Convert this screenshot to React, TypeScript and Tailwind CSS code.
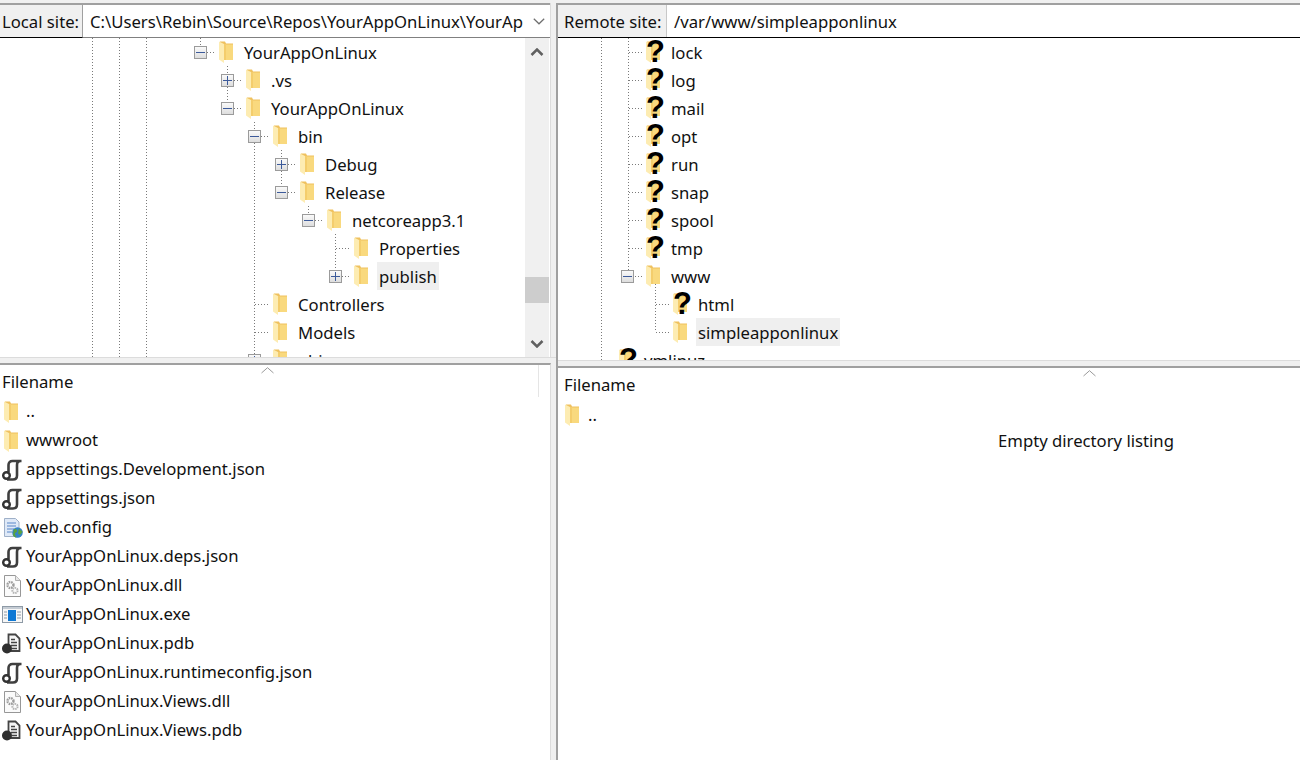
type TreeRow = {
	label: string
	indent: string
	expander?: "open" | "closed"
	unknown?: boolean
	selected?: boolean
}

const leftTree: TreeRow[] = [
	{ label: "YourAppOnLinux", indent: "pl-[194px]", expander: "open" },
	{ label: ".vs", indent: "pl-[221px]", expander: "closed" },
	{ label: "YourAppOnLinux", indent: "pl-[221px]", expander: "open" },
	{ label: "bin", indent: "pl-[248px]", expander: "open" },
	{ label: "Debug", indent: "pl-[275px]", expander: "closed" },
	{ label: "Release", indent: "pl-[275px]", expander: "open" },
	{ label: "netcoreapp3.1", indent: "pl-[302px]", expander: "open" },
	{ label: "Properties", indent: "pl-[329px]" },
	{ label: "publish", indent: "pl-[329px]", expander: "closed", selected: true },
	{ label: "Controllers", indent: "pl-[248px]" },
	{ label: "Models", indent: "pl-[248px]" },
	{ label: "obj", indent: "pl-[248px]", expander: "closed" },
]

const rightTree: TreeRow[] = [
	{ label: "lock", indent: "pl-[63px]", unknown: true },
	{ label: "log", indent: "pl-[63px]", unknown: true },
	{ label: "mail", indent: "pl-[63px]", unknown: true },
	{ label: "opt", indent: "pl-[63px]", unknown: true },
	{ label: "run", indent: "pl-[63px]", unknown: true },
	{ label: "snap", indent: "pl-[63px]", unknown: true },
	{ label: "spool", indent: "pl-[63px]", unknown: true },
	{ label: "tmp", indent: "pl-[63px]", unknown: true },
	{ label: "www", indent: "pl-[63px]", expander: "open" },
	{ label: "html", indent: "pl-[90px]", unknown: true },
	{ label: "simpleapponlinux", indent: "pl-[90px]", selected: true },
	{ label: "vmlinuz", indent: "pl-[36px]", unknown: true },
]

const leftFiles: { name: string; icon: string }[] = [
	{ name: "..", icon: "folder" },
	{ name: "wwwroot", icon: "folder" },
	{ name: "appsettings.Development.json", icon: "script" },
	{ name: "appsettings.json", icon: "script" },
	{ name: "web.config", icon: "config" },
	{ name: "YourAppOnLinux.deps.json", icon: "script" },
	{ name: "YourAppOnLinux.dll", icon: "dll" },
	{ name: "YourAppOnLinux.exe", icon: "exe" },
	{ name: "YourAppOnLinux.pdb", icon: "pdb" },
	{ name: "YourAppOnLinux.runtimeconfig.json", icon: "script" },
	{ name: "YourAppOnLinux.Views.dll", icon: "dll" },
	{ name: "YourAppOnLinux.Views.pdb", icon: "pdb" },
]

const Folder = () => (
	<svg width="14" height="22" viewBox="0 0 14 22" className="shrink-0">
		<path d="M1 0.500h5l1 2h7V19H1z" fill="#efc15f" />
		<path d="M5 3.500h9V19H5z" fill="#f9d97e" />
		<path d="M5 3.500h2V19H5z" fill="#f4cd6c" />
		<path d="M0 0.500l5 2.500V22l-5-3.500z" fill="#fdecb2" />
	</svg>
)

const UnknownFolder = () => (
	<div className="relative w-[14px] h-[22px] shrink-0">
		<Folder />
		<span className="absolute left-0 top-[-6px] font-['Liberation_Sans'] font-bold text-[31px] leading-[34px] text-black">
			?
		</span>
	</div>
)

const Expander = ({ open }: { open: boolean }) => (
	<svg width="13" height="13" viewBox="0 0 13 13" className="shrink-0">
		<defs>
			<linearGradient id="expanderFill" x1="0" x2="0" y1="0" y2="1">
				<stop offset="0" stopColor="#fbfbfb" />
				<stop offset="1" stopColor="#dcdcdc" />
			</linearGradient>
		</defs>
		<rect x="0.5" y="0.5" width="12" height="12" fill="url(#expanderFill)" stroke="#9b9b9b" />
		<path d={open ? "M2 6.5h9" : "M2 6.5h9M6.5 2v9"} stroke="#3c5a9a" shapeRendering="crispEdges" />
	</svg>
)

const FileIcon = ({ type }: { type: string }) => {
	if (type === "folder")
		return (
			<div className="w-5 pl-[3px] flex">
				<Folder />
			</div>
		)
	if (type === "script")
		return (
			<svg width="22" height="22" viewBox="0 0 22 22" className="shrink-0">
				<path
					d="M7.500 13V6c0-2.500 1.500-4 4-4H20.500M19.500 2c-2.500 0-3.500 1.500-3.500 4v10.500c0 2.500-1.500 4-4 4H6"
					fill="none"
					stroke="#3f3f3f"
					strokeWidth="2.600"
				/>
				<circle cx="5.500" cy="16.500" r="3.300" fill="#fff" stroke="#333" strokeWidth="2.400" />
			</svg>
		)
	if (type === "config")
		return (
			<svg width="22" height="22" viewBox="0 0 22 22" className="shrink-0">
				<path d="M3.500 1.500h11l3.500 3.500v14.500h-14.500z" fill="#dfe9f7" stroke="#9fb0c8" />
				<path d="M6 6h9M6 9h9M6 12h7M6 15h5" stroke="#5b88c9" strokeWidth="1.200" />
				<circle cx="16.500" cy="15.500" r="5.300" fill="#3683c6" />
				<path d="M13 12c2.500-.5 3.500 1 3 2.500s-2.500 1-2 3l1.500 3c-1.500 0-3-1-3.500-2.500zM18 11c0 2 1.500 1.500 3.500 3.500-.5 2-1.500 1.500-2.500 3.500l-2-1.500z" fill="#5aa33f" />
			</svg>
		)
	if (type === "dll")
		return (
			<svg width="22" height="22" viewBox="0 0 22 22" className="shrink-0">
				<path d="M3.500 0.500h11l5 5v16h-16z" fill="#fbfbfb" stroke="#979797" />
				<path d="M14.500 0.500v5h5" fill="#e8e8e8" stroke="#b0b0b0" />
				<circle cx="9.500" cy="10" r="3" fill="none" stroke="#9c9c9c" strokeWidth="2.400" strokeDasharray="1.600 0.800" />
				<circle cx="14" cy="15.500" r="2.600" fill="none" stroke="#b4b4b4" strokeWidth="2" strokeDasharray="1.500 0.800" />
			</svg>
		)
	if (type === "exe")
		return (
			<svg width="22" height="20" viewBox="0 0 22 20" className="shrink-0 mt-px">
				<rect x="1.500" y="1.500" width="20" height="16" fill="#f7f7f7" stroke="#8e9aa6" />
				<rect x="2" y="2" width="19" height="2" fill="#c5ccd4" />
				<rect x="7" y="5" width="8" height="11" fill="#0f78d4" />
				<path d="M3 7h3M3 10h3M3 13h3M16 7h4M16 10h4M16 13h4" stroke="#8f9aa5" />
			</svg>
		)
	return (
		<svg width="22" height="22" viewBox="0 0 22 22" className="shrink-0">
			<path d="M7.500 1.500h7l4 4v12.500h-11z" fill="#f6f6f6" stroke="#444" strokeWidth="1.800" />
			<path d="M10 6.500h4M10 9.500h6M10 12.500h6M11 15.500h5" stroke="#444" strokeWidth="1.400" />
			<circle cx="6" cy="15.500" r="5" fill="#2f2f2f" />
		</svg>
	)
}

const ScrollBar = () => (
	<div className="w-[24px] h-full bg-[#f0f0f0] flex flex-col items-center shrink-0">
		<svg width="14" height="8" viewBox="0 0 14 8" className="mt-[10px]">
			<path d="M1.500 7L7 1.500 12.500 7" fill="none" stroke="#606060" strokeWidth="2.500" />
		</svg>
		<div className="w-full h-[26px] bg-[#cdcdcd] mt-[221px]" />
		<svg width="14" height="8" viewBox="0 0 14 8" className="mt-[37px]">
			<path d="M1.500 1L7 6.500 12.500 1" fill="none" stroke="#606060" strokeWidth="2.500" />
		</svg>
	</div>
)

const Tree = ({ rows }: { rows: TreeRow[] }) => (
	<div className="relative">
		{rows.map((row, i) => (
			<div key={i} className={`flex items-center h-[28px] ${row.indent}`}>
				<div className="w-[13px] shrink-0 flex">
					{row.expander && <Expander open={row.expander === "open"} />}
				</div>
				<div className="ml-[12px] mr-[9px]">{row.unknown ? <UnknownFolder /> : <Folder />}</div>
				<span className={`block h-[28px] px-[2px] leading-[30px] whitespace-nowrap ${row.selected ? "bg-[#efefef]" : ""}`}>
					{row.label}
				</span>
			</div>
		))}
	</div>
)

// tree connector dots, coordinates are relative to the pane
const Guides = ({ v, h }: { v: number[][]; h: number[][] }) => (
	<svg width="525" height="340" className="absolute left-0 top-0" shapeRendering="crispEdges">
		{v.map(([x, y1, y2], i) => (
			<line key={i} x1={x + 0.5} x2={x + 0.5} y1={y1} y2={y2} stroke="#7a7a7a" strokeDasharray="1 2" />
		))}
		{h.map(([x1, x2, y], i) => (
			<line key={i} x1={x1} x2={x2} y1={y + 0.5} y2={y + 0.5} stroke="#7a7a7a" strokeDasharray="1 2" />
		))}
	</svg>
)

const leftV = [
	[92, 0, 320],
	[119, 0, 320],
	[146, 0, 320],
	[200, 0, 8],
	[227, 28, 36],
	[227, 49, 64],
	[254, 84, 92],
	[254, 105, 320],
	[281, 112, 120],
	[281, 133, 148],
	[308, 168, 176],
	[335, 196, 232],
]
const leftH = [
	[207, 216, 14],
	[234, 243, 42],
	[234, 243, 70],
	[261, 270, 98],
	[288, 297, 126],
	[288, 297, 154],
	[315, 324, 182],
	[336, 351, 210],
	[342, 351, 238],
	[255, 270, 266],
	[255, 270, 294],
]

const rightV = [
	[43, 0, 322],
	[70, 0, 232],
	[97, 246, 294],
]
const rightH = [
	[71, 86, 14],
	[71, 86, 42],
	[71, 86, 70],
	[71, 86, 98],
	[71, 86, 126],
	[71, 86, 154],
	[71, 86, 182],
	[71, 86, 210],
	[77, 86, 238],
	[98, 113, 266],
	[98, 113, 294],
]

const SortCaret = ({ className }: { className: string }) => (
	<svg width="13" height="7" viewBox="0 0 13 7" className={`absolute ${className}`}>
		<path d="M0.500 6L6.500 0.700 12.500 6" fill="none" stroke="#9a9a9a" />
	</svg>
)

export default function App() {
	return (
		<div className="w-[1300px] h-[760px] bg-[#f0f0f0] pt-[3px] flex overflow-hidden text-[16.7px] text-[#111] font-['Noto_Sans',sans-serif]">
			{/* local site */}
			<div className="w-[556px] flex flex-col shrink-0">
				<div className="w-[551px] h-[354px] bg-white border-r border-[#dcdcdc] flex flex-col shrink-0">
					<div className="h-[35px] shrink-0 flex border-t-2 border-[#a0a0a0]">
						<div className="w-[83px] shrink-0 bg-[#f0f0f0] border-r border-[#a0a0a0] border-b border-b-black pl-[2px] leading-[34px] whitespace-nowrap">
							Local site:
						</div>
						<div className="flex-1 flex items-center min-w-0 border-b border-[#808080]">
							<div className="w-[440px] h-[32px] pl-[7px] overflow-hidden whitespace-nowrap leading-[34px]">
								C:\Users\Rebin\Source\Repos\YourAppOnLinux\YourAppOnLinux\bin\Release
							</div>
							<svg width="12" height="7" viewBox="0 0 12 7" className="ml-[10px] shrink-0">
								<path d="M0.800 0.800L6 5.800 11.200 0.800" fill="none" stroke="#6e6e6e" strokeWidth="1.200" />
							</svg>
						</div>
					</div>
					<div className="flex-1 flex min-h-0 pr-px">
						<div className="relative flex-1 overflow-hidden">
							<Guides v={leftV} h={leftH} />
							<Tree rows={leftTree} />
						</div>
						<ScrollBar />
					</div>
				</div>
				<div className="h-[6px] shrink-0 border-t border-[#dcdcdc]" />
				<div className="relative w-[551px] flex-1 bg-white border-t-2 border-[#a0a0a0] border-r border-r-[#dcdcdc]">
					<SortCaret className="left-[261px] top-[2px]" />
					<div className="absolute left-[538px] top-0 h-[32px] w-px bg-[#e5e5e5]" />
					<div className="h-[32px] pl-[2px] leading-[34px]">Filename</div>
					{leftFiles.map((file) => (
						<div key={file.name} className="flex items-center h-[29px] pl-[1px]">
							<div className="w-[21px] h-[22px] flex shrink-0">
								<FileIcon type={file.icon} />
							</div>
							<span className="block h-[29px] ml-[4px] leading-[28px] whitespace-nowrap">{file.name}</span>
						</div>
					))}
				</div>
			</div>

			{/* remote site */}
			<div className="flex-1 flex flex-col border-l-2 border-[#a0a0a0] min-w-0">
				<div className="h-[357px] bg-white flex flex-col shrink-0">
					<div className="h-[35px] shrink-0 flex border-t-2 border-[#a0a0a0] border-b border-b-black">
						<div className="w-[109px] shrink-0 bg-[#f0f0f0] border-r border-[#c8c8c8] pl-[6px] leading-[34px] whitespace-nowrap">
							Remote site:
						</div>
						<div className="flex-1 pl-[7px] leading-[34px] whitespace-nowrap">/var/www/simpleapponlinux</div>
					</div>
					<div className="relative flex-1 overflow-hidden">
						<Guides v={rightV} h={rightH} />
						<Tree rows={rightTree} />
					</div>
				</div>
				<div className="h-[6px] shrink-0 border-t border-[#dcdcdc]" />
				<div className="relative flex-1 bg-white border-t-2 border-[#a0a0a0]">
					<SortCaret className="left-[525px] top-[2px]" />
					<div className="h-[32px] pl-[6px] leading-[34px]">Filename</div>
					<div className="flex items-center h-[29px] pl-[7px]">
						<Folder />
						<span className="ml-[9px]">..</span>
					</div>
					<div className="pl-[440px] leading-[24px] whitespace-nowrap">Empty directory listing</div>
				</div>
			</div>
		</div>
	)
}
